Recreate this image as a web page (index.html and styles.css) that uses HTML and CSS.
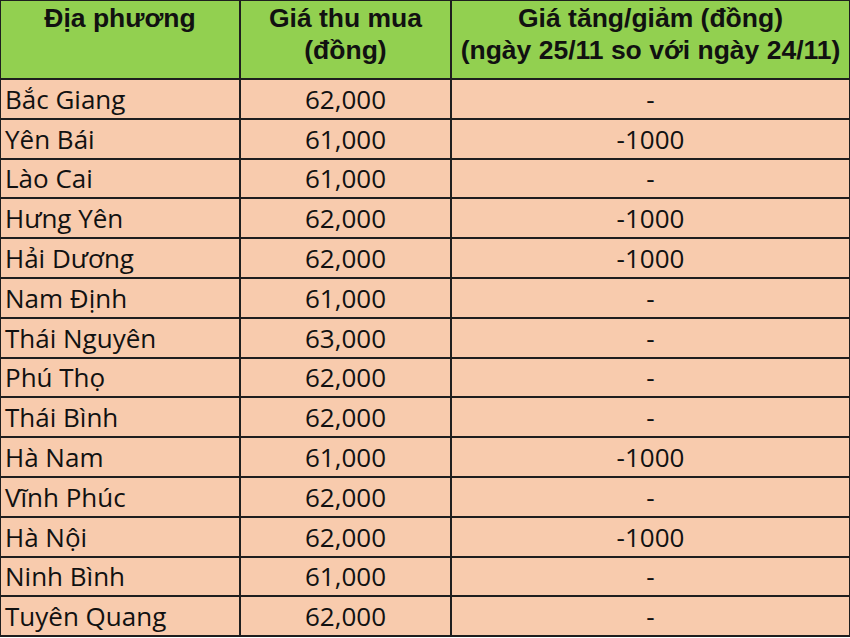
FILE: index.html
```html
<!DOCTYPE html>
<html lang="vi">
<head>
<meta charset="utf-8">
<link rel="stylesheet" href="styles.css">
</head>
<body>
<table class="price">
  <colgroup><col class="c1"><col class="c2"><col class="c3"></colgroup>
  <thead>
    <tr>
      <th>Địa phương</th>
      <th>Giá thu mua<br>(đồng)</th>
      <th>Giá tăng/giảm (đồng)<br>(ngày 25/11 so với ngày 24/11)</th>
    </tr>
  </thead>
  <tbody>
    <tr><td class="name">Bắc Giang</td><td>62,000</td><td>-</td></tr>
    <tr><td class="name">Yên Bái</td><td>61,000</td><td>-1000</td></tr>
    <tr><td class="name">Lào Cai</td><td>61,000</td><td>-</td></tr>
    <tr><td class="name">Hưng Yên</td><td>62,000</td><td>-1000</td></tr>
    <tr><td class="name">Hải Dương</td><td>62,000</td><td>-1000</td></tr>
    <tr><td class="name">Nam Định</td><td>61,000</td><td>-</td></tr>
    <tr><td class="name">Thái Nguyên</td><td>63,000</td><td>-</td></tr>
    <tr><td class="name">Phú Thọ</td><td>62,000</td><td>-</td></tr>
    <tr><td class="name">Thái Bình</td><td>62,000</td><td>-</td></tr>
    <tr><td class="name">Hà Nam</td><td>61,000</td><td>-1000</td></tr>
    <tr><td class="name">Vĩnh Phúc</td><td>62,000</td><td>-</td></tr>
    <tr><td class="name">Hà Nội</td><td>62,000</td><td>-1000</td></tr>
    <tr><td class="name">Ninh Bình</td><td>61,000</td><td>-</td></tr>
    <tr><td class="name">Tuyên Quang</td><td>62,000</td><td>-</td></tr>
  </tbody>
</table>
</body>
</html>
```
FILE: styles.css
```css
html, body {
  margin: 0;
  padding: 0;
  background: #ffffff;
}
.price {
  border-collapse: collapse;
  table-layout: fixed;
  width: 850px;
  margin: -1px 0 0 -1px;
}
.c1 { width: 240px; }
.c2 { width: 211px; }
.c3 { width: 399px; }
.price th, .price td {
  border: 2px solid #1e1e1e;
  padding: 0;
  text-align: center;
  color: #111;
}
.price th {
  background: #92d050;
  font-family: "Liberation Sans", Arial, sans-serif;
  font-weight: bold;
  font-size: 26.5px;
  line-height: 32px;
  height: 76px;
  vertical-align: top;
  padding-top: 1px;
}
.price td {
  background: #f8cbad;
  font-family: "Open Sans", "Noto Sans", sans-serif;
  font-size: 26px;
  height: 37.8px;
  line-height: 36px;
}
.price td.name {
  text-align: left;
  padding-left: 4px;
}
```
